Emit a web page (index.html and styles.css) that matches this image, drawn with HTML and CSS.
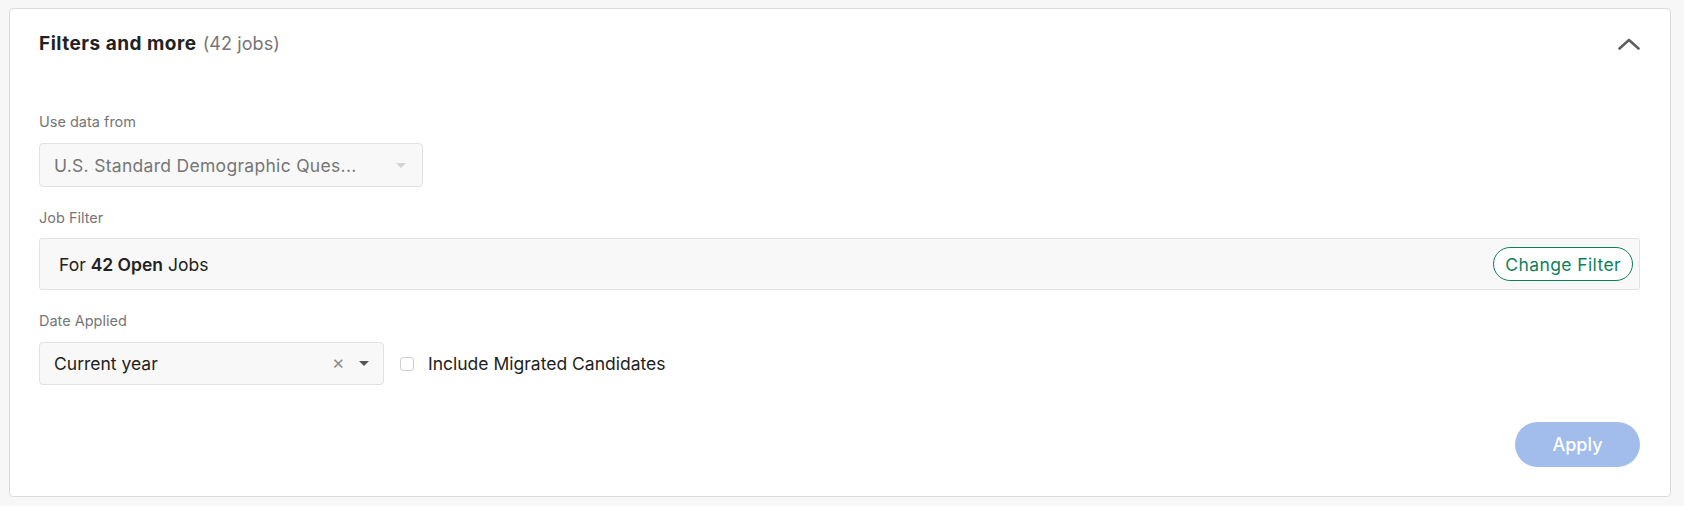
FILE: index.html
```html
<!DOCTYPE html>
<html>
<head>
<meta charset="utf-8">
<link rel="stylesheet" href="styles.css">
</head>
<body>
<div class="page">
  <section class="card">
    <header class="card-header">
      <h2 class="title">Filters and more <span class="count">(42 jobs)</span></h2>
      <svg class="chevron" width="22" height="12" viewBox="0 0 22 12"><path d="M1.5 10.5 L11 2 L20.5 10.5" fill="none" stroke="#5f5f5f" stroke-width="2.6" stroke-linecap="round" stroke-linejoin="round"/></svg>
    </header>
    <div class="card-body">
      <label class="field-label">Use data from</label>
      <div class="select select-disabled select-wide">
        <span class="select-value">U.S. Standard Demographic Ques...</span>
        <span class="caret caret-light"></span>
      </div>

      <label class="field-label gap-lg">Job Filter</label>
      <div class="job-filter">
        <span class="job-text">For <b>42 Open</b> Jobs</span>
        <button class="btn-outline">Change Filter</button>
      </div>

      <label class="field-label gap-lg">Date Applied</label>
      <div class="date-row">
        <div class="select select-date">
          <span class="select-value dark">Current year</span>
          <span class="clear">&#x2715;</span>
          <span class="caret"></span>
        </div>
        <label class="checkbox">
          <span class="box"></span>
          <span class="checkbox-text">Include Migrated Candidates</span>
        </label>
      </div>

      <div class="actions">
        <button class="btn-apply">Apply</button>
      </div>
    </div>
  </section>
</div>
</body>
</html>
```

FILE: styles.css
```css
* { box-sizing: border-box; }
html, body { margin: 0; padding: 0; background: #f7f7f7; }
body { font-family: Inter, "Noto Sans", "Liberation Sans", sans-serif; color: #222; }

.page { padding: 8px 13px 8px 9px; }

.card {
  background: #fff;
  border: 1px solid #d8dcdb;
  border-radius: 4px;
  padding: 0 30px 29px 29px;
}

.card-header {
  display: flex;
  justify-content: space-between;
  align-items: flex-start;
  padding-top: 23px;
  height: 80px;
}
.title {
  margin: 0;
  font-size: 19px;
  line-height: 24px;
  font-weight: 700;
  color: #222;
  letter-spacing: 0.5px;
}
.count {
  font-size: 18px;
  font-weight: 400;
  color: #767676;
  margin-left: 1px;
  letter-spacing: 0.1px;
}
.chevron { margin-top: 6px; }

.card-body { padding-top: 23px; }

.field-label {
  display: block;
  font-size: 14.5px;
  line-height: 20px;
  color: #767676;
}
.gap-lg { margin-top: 21px; }

.select {
  margin-top: 11px;
  display: flex;
  align-items: center;
  height: 44px;
  padding: 0 14px;
  background: #f8f8f8;
  border: 1px solid #e2e2e2;
  border-radius: 4px;
  font-size: 17.5px;
}
.select-wide { width: 384px; }
.select-wide .select-value { letter-spacing: 0.3px; }
.select-value { flex: 1; color: #767676; white-space: nowrap; }
.select-value.dark { color: #222; }
.caret {
  width: 0; height: 0;
  border-left: 5px solid transparent;
  border-right: 5px solid transparent;
  border-top: 5px solid #555;
}
.caret-light { border-top-color: #d4d4d4; margin-right: 2px; }

.job-filter {
  margin-top: 10px;
  height: 52px;
  display: flex;
  align-items: center;
  justify-content: space-between;
  padding: 0 6px 0 19px;
  background: #f8f8f8;
  border: 1px solid #e2e2e2;
  border-radius: 3px;
  font-size: 17.5px;
  color: #222;
}
.job-text b { font-weight: 600; }
.btn-outline {
  height: 34px;
  padding: 0 11px;
  border: 1px solid #0f7f5b;
  border-radius: 17px;
  background: #fff;
  color: #0f7f5b;
  font-family: inherit;
  font-size: 17.5px;
  letter-spacing: 0.4px;
}

.date-row {
  margin-top: 11px;
  display: flex;
  align-items: center;
}
.select-date { margin-top: 0; width: 345px; height: 43px; }
.clear {
  font-size: 15px;
  color: #8a8a8a;
  margin-right: 14px;
}

.checkbox {
  display: flex;
  align-items: center;
  margin-left: 16px;
  font-size: 17.5px;
  color: #222;
}
.box {
  width: 14px; height: 14px;
  border: 1px solid #cfcfcf;
  border-radius: 3px;
  background: #fff;
  margin-right: 14px;
}

.actions {
  display: flex;
  justify-content: flex-end;
  margin-top: 37px;
}
.btn-apply {
  width: 125px;
  height: 45px;
  border: none;
  border-radius: 23px;
  background: #a2bdeb;
  color: #fff;
  font-family: inherit;
  font-size: 18px;
  font-weight: 500;
}
```
